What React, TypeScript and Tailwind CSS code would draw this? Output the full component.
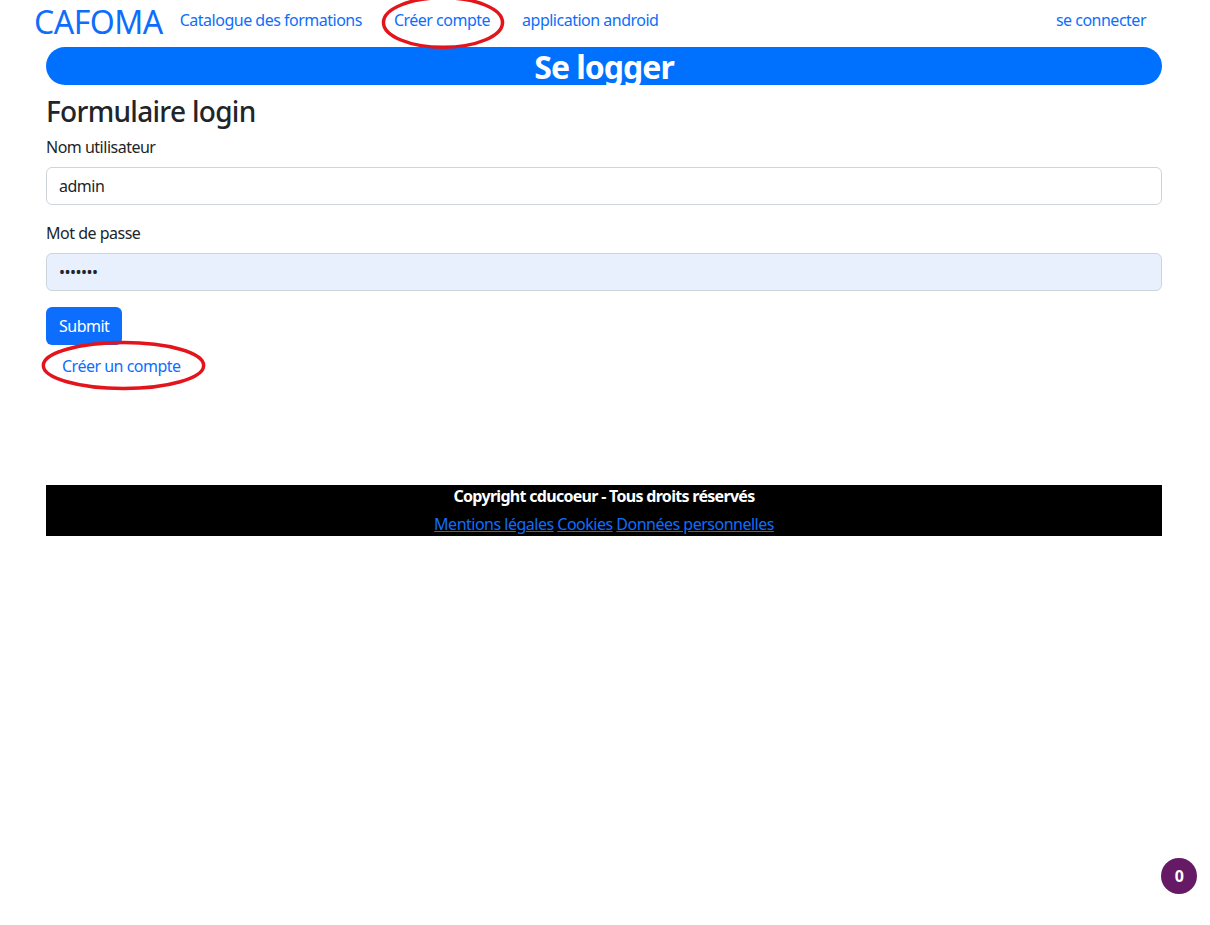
import React from 'react';

const navLinks = ['Catalogue des formations', 'Créer compte', 'application android'];

function Ellipse({ className }: { className: string }) {
  return (
    <svg className={`pointer-events-none absolute ${className}`} viewBox="0 0 100 100" preserveAspectRatio="none">
      <ellipse cx="50" cy="50" rx="48" ry="45" fill="none" stroke="#e3141c" strokeWidth="3.5" vectorEffect="non-scaling-stroke" />
    </svg>
  );
}

export default function App() {
  return (
    <div
      className="relative min-h-[925px] bg-white tracking-[-0.5px] text-[#212529]"
      style={{ fontFamily: '"Segoe UI", "Noto Sans", sans-serif' }}
    >
      {/* Navbar */}
      <header className="relative flex h-[47px] items-center pl-[34px] pr-[64px]">
        <a href="#" className="mr-[17px] -mt-[4px] text-[32px] leading-none text-[#0d6efd]">CAFOMA</a>
        <nav className="flex items-center -mt-[8px]">
          {navLinks.map((l) => (
            <a key={l} href="#" className="px-4 text-[16px] text-[#0d6efd] first:pl-0">{l}</a>
          ))}
        </nav>
        <a href="#" className="ml-auto -mt-[8px] text-[16px] text-[#0d6efd]">se connecter</a>
        <Ellipse className="left-[381px] top-[-5px] h-[55px] w-[124px]" />
      </header>

      <main className="ml-[46px] w-[1116px]">
        <div className="flex h-[38px] items-end justify-center rounded-full bg-[#0070ff]">
          <h1 className="-mb-[2px] text-[32px] font-bold leading-[40px] tracking-[-1px] text-white">Se logger</h1>
        </div>

        <h2 className="mt-[8px] text-[28px] font-medium leading-[36px] tracking-[-0.7px]">Formulaire login</h2>

        <form className="mt-[6px]">
          <label className="block text-[16px] leading-6">Nom utilisateur</label>
          <input
            defaultValue="admin"
            className="mt-[8px] block h-[38px] w-full rounded-[6px] border border-[#ced4da] px-3 text-[16px] outline-none"
          />
          <label className="mt-[16px] block text-[16px] leading-6">Mot de passe</label>
          <input
            type="password"
            defaultValue="1234567"
            className="mt-[8px] block h-[38px] w-full rounded-[6px] border border-[#ced4da] bg-[#e8f0fe] px-3 text-[16px] outline-none"
          />
          <button type="button" className="mt-[16px] block h-[38px] rounded-[6px] bg-[#0d6efd] px-[13px] text-[16px] text-white">
            Submit
          </button>
        </form>

        <div className="relative">
          <a href="#" className="ml-4 mt-[9px] inline-block text-[16px] leading-6 text-[#0d6efd]">Créer un compte</a>
          <Ellipse className="left-[-6px] top-[-5px] h-[51px] w-[167px]" />
        </div>

        <footer className="mt-[107px] flex h-[51px] flex-col items-center bg-black pt-[1px] text-[16px]">
          <p className="font-bold leading-[20px] tracking-[-0.7px] text-white">Copyright cducoeur - Tous droits réservés</p>
          <p className="mt-[8px] leading-[20px]">
            <a href="#" className="text-[#0d6efd] underline">Mentions légales</a>{' '}
            <a href="#" className="text-[#0d6efd] underline">Cookies</a>{' '}
            <a href="#" className="text-[#0d6efd] underline">Données personnelles</a>
          </p>
        </footer>
      </main>

      <div className="absolute left-[1161px] top-[858px] flex h-[36px] w-[36px] items-center justify-center rounded-full bg-[#661a66] text-[16px] font-bold text-white">
        0
      </div>
    </div>
  );
}
